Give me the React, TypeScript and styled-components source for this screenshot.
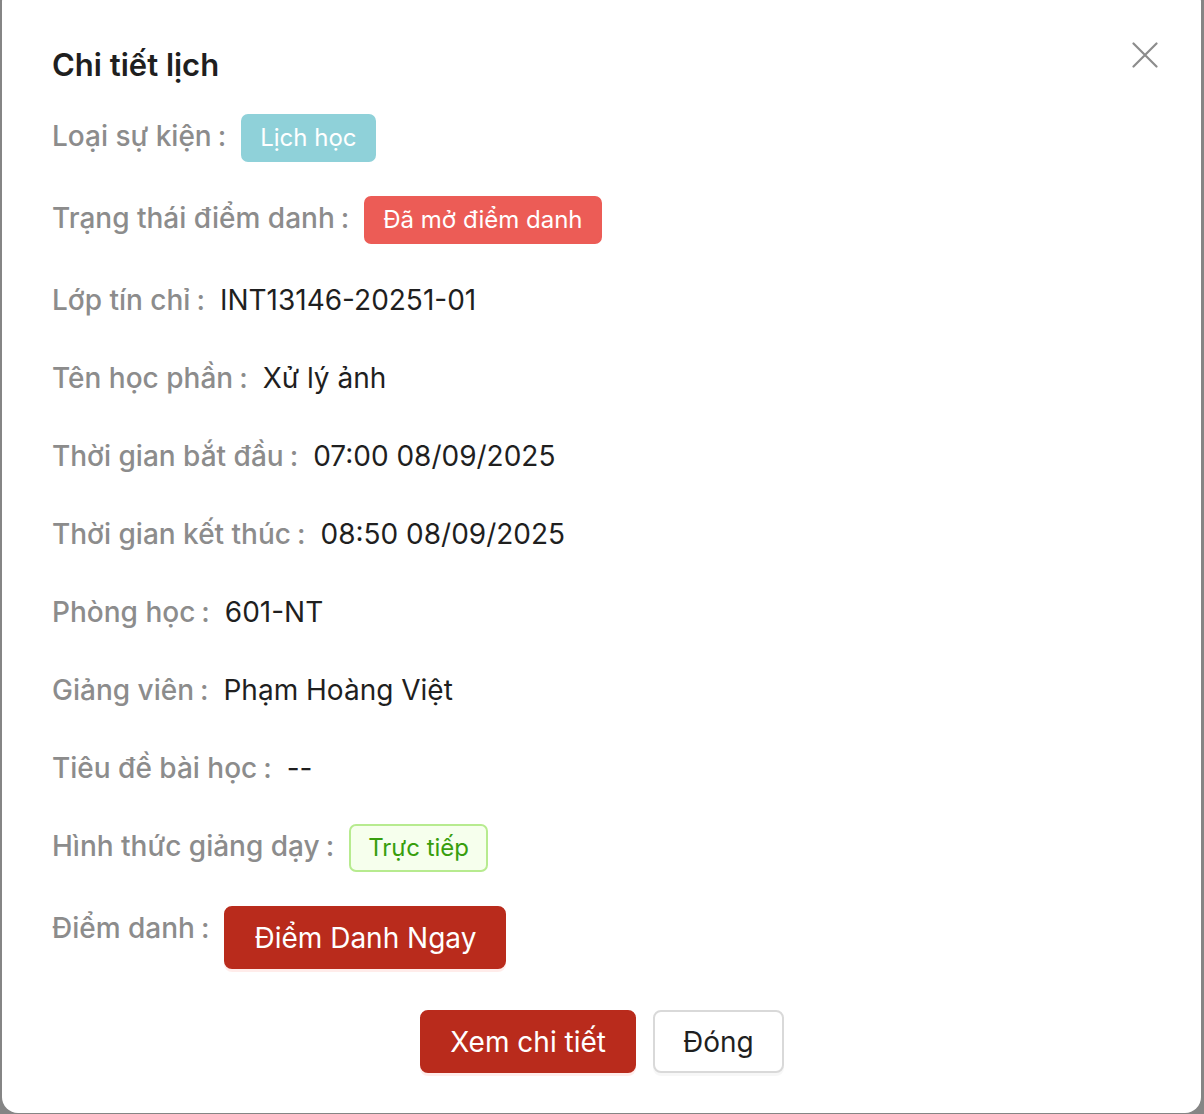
import styled, { createGlobalStyle } from 'styled-components';

const GlobalStyle = createGlobalStyle`
  html, body {
    margin: 0;
    padding: 0;
    background: #858585;
    overflow: hidden;
  }
  body {
    font-family: Inter, 'Noto Sans', sans-serif;
  }
`;

const Backdrop = styled.div`
  width: 1204px;
  height: 1114px;
  padding: 0 3px 0 2px;
  box-sizing: border-box;
  overflow: hidden;
`;

const Modal = styled.div`
  position: relative;
  margin-top: -14px;
  height: 1127px;
  box-sizing: border-box;
  background: #ffffff;
  border-radius: 16px;
  padding: 57px 49px 0 50px;
  display: flex;
  flex-direction: column;
`;

const Title = styled.h2`
  margin: 0 0 27px;
  font-size: 31px;
  line-height: 44px;
  font-weight: 600;
  color: #1f1f1f;
`;

const CloseButton = styled.button`
  position: absolute;
  top: 53px;
  right: 40px;
  width: 32px;
  height: 32px;
  padding: 0;
  border: none;
  background: transparent;
  display: flex;
  align-items: center;
  justify-content: center;
  cursor: pointer;
`;

const List = styled.div`
  display: flex;
  flex-direction: column;
  gap: 34px;
`;

const Row = styled.div`
  display: flex;
  align-items: flex-start;
  font-size: 28px;
  line-height: 44px;
`;

const Label = styled.span`
  color: #8c8c8c;
  font-weight: 500;
  white-space: nowrap;
  &::after {
    content: ':';
    margin: 0 15px 0 6px;
  }
`;

const Value = styled.span`
  color: #1f1f1f;
`;

const Tag = styled.span<{ $bg: string; $fg: string; $border?: string }>`
  display: inline-flex;
  align-items: center;
  height: 48px;
  padding: 0 17px;
  box-sizing: border-box;
  border-radius: 7px;
  background: ${(p) => p.$bg};
  color: ${(p) => p.$fg};
  border: 2px solid ${(p) => p.$border || p.$bg};
  font-size: 24px;
`;

const Button = styled.button<{ $primary?: boolean }>`
  height: 63px;
  padding: 0 28px;
  border-radius: 8px;
  font-family: inherit;
  font-size: 28px;
  cursor: pointer;
  border: 2px solid ${(p) => (p.$primary ? '#b92b1c' : '#d9d9d9')};
  background: ${(p) => (p.$primary ? '#b92b1c' : '#ffffff')};
  color: ${(p) => (p.$primary ? '#ffffff' : '#1f1f1f')};
  box-shadow: 0 3px 0 ${(p) => (p.$primary ? 'rgba(255, 100, 80, 0.12)' : 'rgba(0, 0, 0, 0.03)')};
`;

const Footer = styled.div`
  display: flex;
  justify-content: center;
  gap: 17px;
  margin-top: 41px;
`;

const rows: { label: string; value: string }[] = [
  { label: 'Lớp tín chỉ', value: 'INT13146-20251-01' },
  { label: 'Tên học phần', value: 'Xử lý ảnh' },
  { label: 'Thời gian bắt đầu', value: '07:00 08/09/2025' },
  { label: 'Thời gian kết thúc', value: '08:50 08/09/2025' },
  { label: 'Phòng học', value: '601-NT' },
  { label: 'Giảng viên', value: 'Phạm Hoàng Việt' },
  { label: 'Tiêu đề bài học', value: '--' },
];

export default function App() {
  return (
    <>
      <GlobalStyle />
      <Backdrop>
        <Modal>
          <CloseButton aria-label="close">
            <svg width="26" height="26" viewBox="0 0 26 26">
              <path d="M1.5 1.5 L24.5 24.5 M24.5 1.5 L1.5 24.5" stroke="#8c8c8c" strokeWidth="2.2" strokeLinecap="round" />
            </svg>
          </CloseButton>
          <Title>Chi tiết lịch</Title>
          <List>
            <Row>
              <Label>Loại sự kiện</Label>
              <Tag $bg="#8fd1d9" $fg="#ffffff">Lịch học</Tag>
            </Row>
            <Row>
              <Label>Trạng thái điểm danh</Label>
              <Tag $bg="#ec5c56" $fg="#ffffff">Đã mở điểm danh</Tag>
            </Row>
            {rows.map((r) => (
              <Row key={r.label}>
                <Label>{r.label}</Label>
                <Value>{r.value}</Value>
              </Row>
            ))}
            <Row>
              <Label>Hình thức giảng dạy</Label>
              <Tag $bg="#f6ffed" $fg="#389e0d" $border="#b7eb8f">Trực tiếp</Tag>
            </Row>
            <Row>
              <Label>Điểm danh</Label>
              <Button $primary>Điểm Danh Ngay</Button>
            </Row>
          </List>
          <Footer>
            <Button $primary>Xem chi tiết</Button>
            <Button>Đóng</Button>
          </Footer>
        </Modal>
      </Backdrop>
    </>
  );
}
